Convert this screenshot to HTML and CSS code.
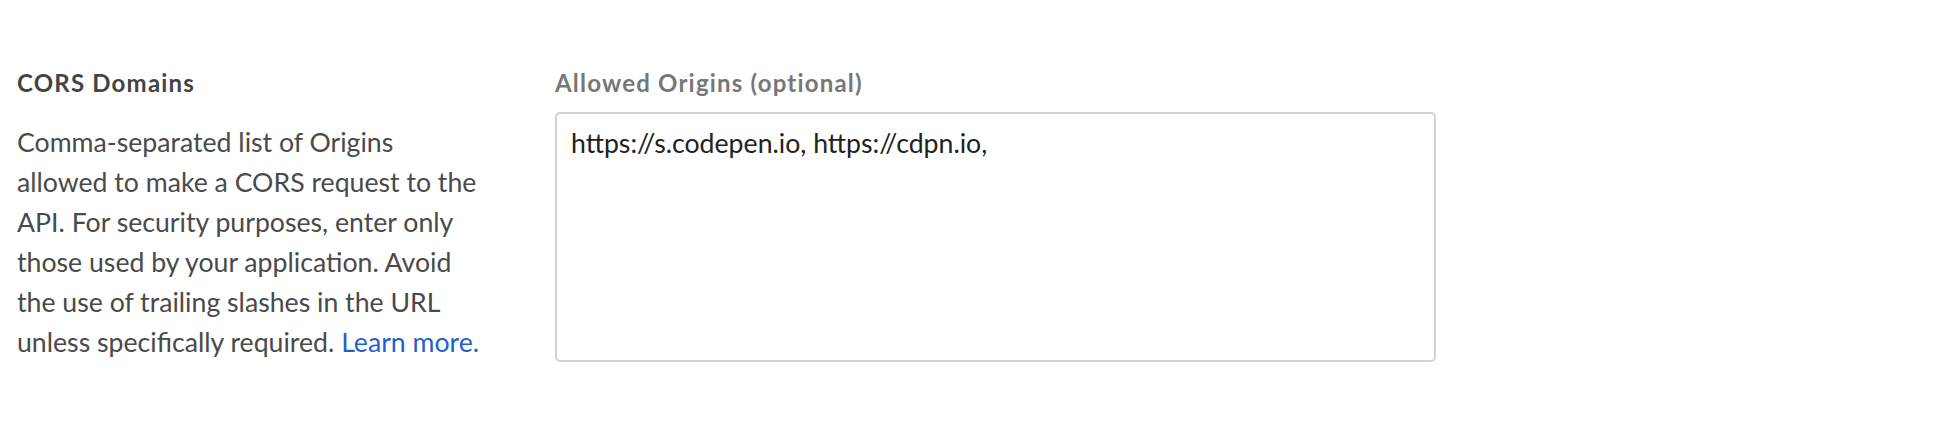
FILE: index.html
```html
<!DOCTYPE html>
<html lang="en">
<head>
<meta charset="utf-8">
<title>CORS Domains</title>
<link rel="stylesheet" href="styles.css">
</head>
<body>
<section class="setting">
  <div class="setting-info">
    <h3 class="setting-title">CORS Domains</h3>
    <p class="setting-desc">Comma-separated list of Origins allowed to make a CORS request to the API. For security purposes, enter only those used by your application. Avoid the use of trailing slashes in the URL unless specifically required. <a class="link" href="#">Learn more.</a></p>
  </div>
  <div class="setting-field">
    <label class="field-label" for="origins">Allowed Origins (optional)</label>
    <textarea class="field-input" id="origins">https://s.codepen.io, https://cdpn.io,</textarea>
  </div>
</section>
</body>
</html>
```

FILE: styles.css
```css
html, body {
  margin: 0;
  padding: 0;
  background: #ffffff;
}

body {
  font-family: Lato, "Liberation Sans", sans-serif;
  color: #444444;
}

.setting {
  display: flex;
  padding: 69px 0 0 17px;
}

.setting-info {
  width: 465px;
  flex: none;
}

.setting-title {
  margin: 0;
  font-size: 24px;
  font-weight: 700;
  line-height: 28px;
  letter-spacing: 1.2px;
  color: #444444;
}

.setting-desc {
  margin: 25px 0 0;
  font-size: 26.67px;
  line-height: 40px;
  color: #4a4a4a;
}

.link {
  color: #1f5fd1;
  text-decoration: none;
}

.setting-field {
  margin-left: 73px;
  display: flex;
  flex-direction: column;
}

.field-label {
  font-size: 24px;
  font-weight: 700;
  line-height: 28px;
  letter-spacing: 1.2px;
  color: #777777;
}

.field-input {
  margin-top: 15px;
  width: 881px;
  height: 250px;
  box-sizing: border-box;
  padding: 14px 14px;
  border: 2px solid #d2d2d2;
  border-radius: 5px;
  font-family: Lato, "Liberation Sans", sans-serif;
  font-size: 26.67px;
  line-height: 30px;
  color: #222222;
  resize: none;
  outline: none;
}
```
